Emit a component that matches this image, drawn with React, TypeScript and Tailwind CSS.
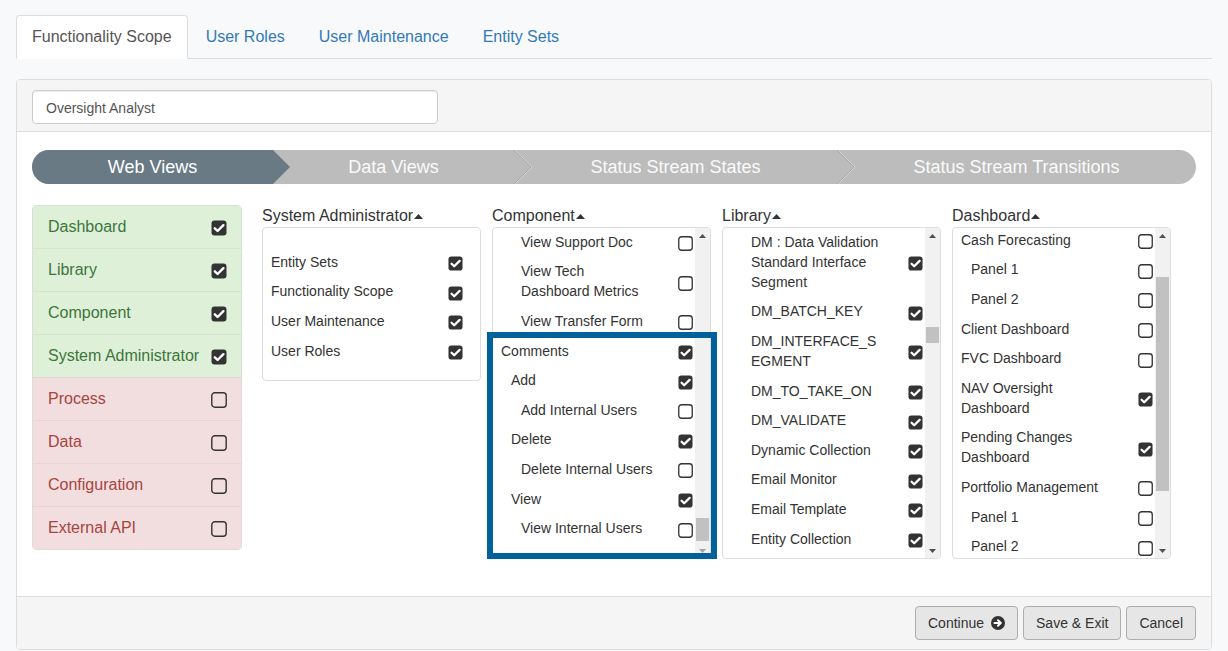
import clsx from "clsx";

type Item = { text: string; level: 0 | 1 | 2; checked: boolean };

const sysAdmin: Item[] = [
  { text: "Entity Sets", level: 0, checked: true },
  { text: "Functionality Scope", level: 0, checked: true },
  { text: "User Maintenance", level: 0, checked: true },
  { text: "User Roles", level: 0, checked: true },
];

const components: Item[] = [
  { text: "View Support Doc", level: 2, checked: false },
  { text: "View Tech Dashboard Metrics", level: 2, checked: false },
  { text: "View Transfer Form", level: 2, checked: false },
  { text: "Comments", level: 0, checked: true },
  { text: "Add", level: 1, checked: true },
  { text: "Add Internal Users", level: 2, checked: false },
  { text: "Delete", level: 1, checked: true },
  { text: "Delete Internal Users", level: 2, checked: false },
  { text: "View", level: 1, checked: true },
  { text: "View Internal Users", level: 2, checked: false },
];

const library: Item[] = [
  { text: "DM : Data Validation Standard Interface Segment", level: 2, checked: true },
  { text: "DM_BATCH_KEY", level: 2, checked: true },
  { text: "DM_INTERFACE_SEGMENT", level: 2, checked: true },
  { text: "DM_TO_TAKE_ON", level: 2, checked: true },
  { text: "DM_VALIDATE", level: 2, checked: true },
  { text: "Dynamic Collection", level: 2, checked: true },
  { text: "Email Monitor", level: 2, checked: true },
  { text: "Email Template", level: 2, checked: true },
  { text: "Entity Collection", level: 2, checked: true },
];

const dashboards: Item[] = [
  { text: "Cash Forecasting", level: 0, checked: false },
  { text: "Panel 1", level: 1, checked: false },
  { text: "Panel 2", level: 1, checked: false },
  { text: "Client Dashboard", level: 0, checked: false },
  { text: "FVC Dashboard", level: 0, checked: false },
  { text: "NAV Oversight Dashboard", level: 0, checked: true },
  { text: "Pending Changes Dashboard", level: 0, checked: true },
  { text: "Portfolio Management", level: 0, checked: false },
  { text: "Panel 1", level: 1, checked: false },
  { text: "Panel 2", level: 1, checked: false },
];

const modules = [
  { name: "Dashboard", ok: true },
  { name: "Library", ok: true },
  { name: "Component", ok: true },
  { name: "System Administrator", ok: true },
  { name: "Process", ok: false },
  { name: "Data", ok: false },
  { name: "Configuration", ok: false },
  { name: "External API", ok: false },
];

const indent = ["pl-[8px]", "pl-[18px]", "pl-[28px]"];

// checkbox as drawn by the browser theme in the screenshot
function CheckBox({ on, size = 15, fill = "#fff", className }: { on: boolean; size?: number; fill?: string; className?: string }) {
  return (
    <svg width={size} height={size} viewBox="0 0 16 16" className={clsx("shrink-0", className)}>
      {on ? (
        <>
          <rect x="0.5" y="0.5" width="15" height="15" rx="3" fill="#333" />
          <path d="M3.8 8.3l2.8 2.7L12.4 5.2" stroke="#fff" strokeWidth="2.4" fill="none" strokeLinecap="round" strokeLinejoin="round" />
        </>
      ) : (
        <rect x="0.8" y="0.8" width="14.4" height="14.4" rx="3" fill={fill} stroke="#333" strokeWidth="1.4" />
      )}
    </svg>
  );
}

function Caret() {
  return (
    <svg width="9" height="5" viewBox="0 0 9 5" className="ml-[1px] inline-block align-middle">
      <path d="M0 5L4.5 0L9 5Z" fill="#333" />
    </svg>
  );
}

function Row({ item }: { item: Item }) {
  return (
    <div className={clsx("flex items-center py-[4.8px] pr-[2px] leading-5", indent[item.level])}>
      <span className="min-w-0 flex-1 break-words pr-[25px]">{item.text}</span>
      <CheckBox on={item.checked} className="translate-y-[2px]" />
    </div>
  );
}

function Scrollbar({ thumb, downDim }: { thumb: string; downDim?: boolean }) {
  return (
    <div className="flex w-[15px] shrink-0 flex-col bg-[#f1f1f1]">
      <div className="flex h-[15px] items-center justify-center">
        <svg width="7" height="4" viewBox="0 0 7 4">
          <path d="M0 4L3.5 0L7 4Z" fill="#505050" />
        </svg>
      </div>
      <div className="flex-1">
        <div className={clsx("mx-[1px] bg-[#c1c1c1]", thumb)} />
      </div>
      <div className="flex h-[15px] items-center justify-center">
        <svg width="7" height="4" viewBox="0 0 7 4">
          <path d="M0 0L3.5 4L7 0Z" fill={downDim ? "#a3a3a3" : "#505050"} />
        </svg>
      </div>
    </div>
  );
}

function ScrollBox({ items, thumb, downDim, offset }: { items: Item[]; thumb: string; downDim?: boolean; offset?: string }) {
  return (
    <div className="flex h-[332px] overflow-hidden rounded-[4px] border border-[#ddd] bg-white">
      <div className={clsx("min-w-0 flex-1 overflow-hidden", offset)}>
        {items.map((it, i) => (
          <Row key={i} item={it} />
        ))}
      </div>
      <Scrollbar thumb={thumb} downDim={downDim} />
    </div>
  );
}

function Step({ children, dark, className }: { children: string; dark?: boolean; className: string }) {
  return (
    <div className={clsx("grid", className)}>
      <svg width="18" height="34" viewBox="0 0 18 34" className="[grid-area:1/1]">
        {dark ? (
          <path d="M0 0L17 17L0 34Z" fill="#697a85" />
        ) : (
          <>
            <polyline points="1,0 18,17 1,34" stroke="#d3d3d3" strokeWidth="1" fill="none" />
            <polyline points="0,0 17,17 0,34" stroke="#a7a7a7" strokeWidth="1" fill="none" />
          </>
        )}
      </svg>
      <span className="self-center justify-self-center [grid-area:1/1]">{children}</span>
    </div>
  );
}

export default function App() {
  return (
    <div className="min-h-screen bg-[#f8f9fb] px-4 pt-[15px] font-['Liberation_Sans',Arial,sans-serif] text-[#333]">
      {/* Tabs */}
      <ul className="flex border-b border-[#ddd] text-[16px] leading-[22px]">
        <li className="-mb-px mr-[2px] rounded-t-[4px] border border-[#ddd] border-b-transparent bg-white px-[15px] py-[10px] text-[#555]">
          Functionality Scope
        </li>
        {["User Roles", "User Maintenance", "Entity Sets"].map((t) => (
          <li key={t} className="-mb-px mr-[2px] border border-transparent px-[15px] py-[10px] text-[#337ab7]">
            {t}
          </li>
        ))}
      </ul>

      {/* Panel */}
      <div className="mt-[20px] overflow-hidden rounded-[4px] border border-[#ddd] bg-white">
        <div className="border-b border-[#ddd] bg-[#f5f5f5] px-[15px] pt-[10px] pb-[7px]">
          <input
            readOnly
            defaultValue="Oversight Analyst"
            className="h-[34px] w-[406px] rounded-[4px] border border-[#ccc] bg-white px-[13px] pt-[2px] text-[14px] text-[#555] shadow-[inset_0_1px_1px_rgba(0,0,0,0.075)] outline-none"
          />
        </div>

        <div className="px-[15px] pt-[18px] pb-[37px]">
          {/* Wizard steps */}
          <div className="flex h-[34px] overflow-hidden rounded-full bg-[#bcbcbc] text-[18px] text-[#fafafa]">
            <div className="flex w-[241px] items-center justify-center bg-[#697a85] text-white">Web Views</div>
            <Step dark className="w-[241px]">Data Views</Step>
            <Step className="w-[323px]">Status Stream States</Step>
            <Step className="flex-1">Status Stream Transitions</Step>
          </div>

          <div className="mt-[21px] flex items-start gap-[20px]">
            {/* Module list */}
            <div className="w-[210px] overflow-hidden rounded-[4px] border border-[#dcdcdc] text-[16px]">
              {modules.map((m, i) => (
                <div
                  key={m.name}
                  className={clsx(
                    "flex items-center justify-between pr-[14px] pl-[15px]",
                    i > 0 ? "h-[43px] border-t" : "h-[42px]",
                    m.ok ? "border-[#d3e3cc] bg-[#dff0d8] text-[#3c763d]" : "border-[#e6d3d3] bg-[#f2dede] text-[#a94442]"
                  )}
                >
                  <span>{m.name}</span>
                  <CheckBox on={m.ok} size={16} fill="none" className="translate-y-[1px]" />
                </div>
              ))}
            </div>

            {/* Permission columns */}
            <div className="grid grid-cols-[219px_219px_219px_219px] gap-[11px] text-[14px]">
              <div>
                <div className="text-[16px] leading-[22px]">
                  System Administrator
                  <Caret />
                </div>
                <div className="flex rounded-[4px] border border-[#ddd] bg-white pt-[19px] pb-[15px]">
                  <div className="flex-1">
                    {sysAdmin.map((it) => (
                      <Row key={it.text} item={it} />
                    ))}
                  </div>
                  <div className="w-[15px]" />
                </div>
              </div>

              <div>
                <div className="text-[16px] leading-[22px]">
                  Component
                  <Caret />
                </div>
                <div className="relative">
                  <ScrollBox items={components} thumb="mt-[275px] h-[23px]" downDim offset="-mt-[1px]" />
                  {/* tour highlight */}
                  <div className="absolute top-[105px] left-[-5px] h-[227px] w-[230px] border-[6px] border-[#01619b]" />
                </div>
              </div>

              <div>
                <div className="text-[16px] leading-[22px]">
                  Library
                  <Caret />
                </div>
                <ScrollBox items={library} thumb="mt-[84px] h-[16px]" offset="-mt-[1px]" />
              </div>

              <div>
                <div className="text-[16px] leading-[22px]">
                  Dashboard
                  <Caret />
                </div>
                <ScrollBox items={dashboards} thumb="mt-[34px] h-[214px]" offset="-mt-[3px]" />
              </div>
            </div>
          </div>
        </div>

        {/* Footer */}
        <div className="flex justify-end gap-[5px] border-t border-[#ddd] bg-[#f5f5f5] px-[15px] py-[9px] text-[14px]">
          <button className="flex h-[34px] items-center gap-[7px] rounded-[4px] border border-[#adadad] bg-[#e6e6e6] px-[12px] text-[#333]">
            Continue
            <svg width="14" height="14" viewBox="0 0 14 14">
              <circle cx="7" cy="7" r="7" fill="#333" />
              <path d="M3.5 7H9.3M7 4.3L9.8 7L7 9.7" stroke="#fff" strokeWidth="2" fill="none" strokeLinecap="round" strokeLinejoin="round" />
            </svg>
          </button>
          <button className="flex h-[34px] items-center rounded-[4px] border border-[#adadad] bg-[#e6e6e6] px-[12px] text-[#333]">
            Save &amp; Exit
          </button>
          <button className="flex h-[34px] items-center rounded-[4px] border border-[#adadad] bg-[#e6e6e6] px-[12px] text-[#333]">
            Cancel
          </button>
        </div>
      </div>
    </div>
  );
}
